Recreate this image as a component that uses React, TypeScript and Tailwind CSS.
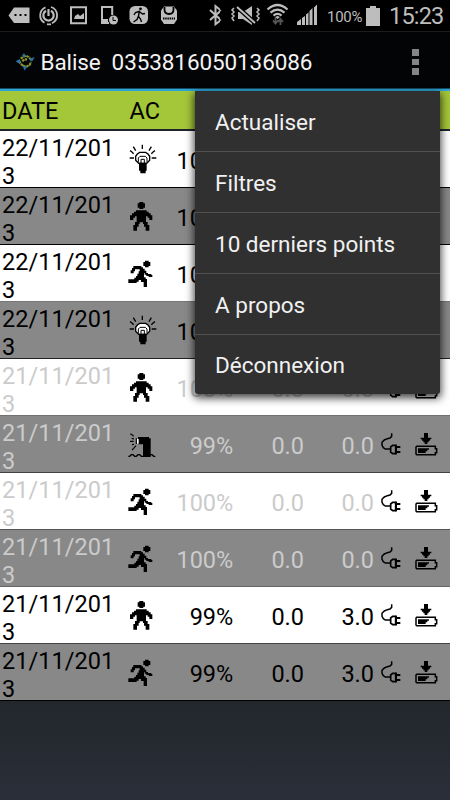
import React from 'react';
import clsx from 'clsx';

type Activity = 'light' | 'still' | 'run' | 'beacon';

interface Point {
  date: string;
  activity: Activity;
  battery: string;
  speed: string;
  distance: string;
  faded?: boolean;
  line: string;
}

const points: Point[] = [
  { date: '22/11/2013', activity: 'light', battery: '100%', speed: '0.0', distance: '0.0', line: 'border-black' },
  { date: '22/11/2013', activity: 'still', battery: '100%', speed: '0.0', distance: '0.0', line: 'border-black' },
  { date: '22/11/2013', activity: 'run', battery: '100%', speed: '0.0', distance: '0.0', line: 'border-[#777]' },
  { date: '22/11/2013', activity: 'light', battery: '100%', speed: '0.0', distance: '0.0', line: 'border-[#222]' },
  { date: '21/11/2013', activity: 'still', battery: '100%', speed: '0.0', distance: '0.0', faded: true, line: 'border-[#707070]' },
  { date: '21/11/2013', activity: 'beacon', battery: '99%', speed: '0.0', distance: '0.0', faded: true, line: 'border-[#444]' },
  { date: '21/11/2013', activity: 'run', battery: '100%', speed: '0.0', distance: '0.0', faded: true, line: 'border-[#555]' },
  { date: '21/11/2013', activity: 'run', battery: '100%', speed: '0.0', distance: '0.0', faded: true, line: 'border-[#666]' },
  { date: '21/11/2013', activity: 'still', battery: '99%', speed: '0.0', distance: '3.0', line: 'border-[#444]' },
  { date: '21/11/2013', activity: 'run', battery: '99%', speed: '0.0', distance: '3.0', line: 'border-black' },
];

const menuItems = ['Actualiser', 'Filtres', '10 derniers points', 'A propos', 'Déconnexion'];

function ActivityIcon({ type }: { type: Activity }) {
  return (
    <svg viewBox="0 0 90 90" className="h-[30px] w-[30px] overflow-visible">
      {type === 'still' && (
        <>
          <path d="M40 3H52V7H57V20H52V24H40V20H35V7H40Z" />
          <path d="M30 28H62V32H68V37H74V43H79V57H70V50H65V46H60V63H65V72H70V89H59V77H54V69H51V64H41V69H38V77H33V89H22V72H27V63H32V46H27V50H22V57H12V43H18V37H24V32H30Z" />
        </>
      )}
      {type === 'run' && (
        <>
          <path d="M57 8H68V12H73V24H68V28H57V24H52V12H57Z" />
          <path d="M22 24H46V28H51V32H56V38H61V45H66V48H76V51H79V57H68V54H61V50H56V45H54V58H59V63H63V87H53V72H45V66H38V71H32V75H7V64H25V59H30V54H34V47H38V40H41V34H27V40H23V46H14V37H18V30H22Z" />
        </>
      )}
      {type === 'light' && (
        <>
          <path
            d="M38 58l-4-4-5-5V37l5-7 7-5h18l7 5 5 7v12l-5 5-4 4z"
            fill="#fff"
            stroke="#000"
            strokeWidth="4"
          />
          <path d="M37 54V42l5-5h16l5 5v12M45 57V46h10v11" fill="none" stroke="#000" strokeWidth="3" />
          <path d="M39 56h23v24h-3v8H43v-8h-4z" />
          <path
            d="M49 2v13M22 8l3 5 4 7M76 8l-3 5-4 7M12 20l5 3 6 6M87 20l-5 3-6 6M11 42h13M77 42h14"
            fill="none"
            stroke="#000"
            strokeWidth="4"
          />
        </>
      )}
      {type === 'beacon' && (
        <>
          <path d="M36 24H69V28H74V84H51V46H36Z" />
          <rect x="32" y="30" width="6" height="14" fill="#fff" />
          <path
            d="M13 14l5 3 5 5M12 37h11M17 28l7 2M24 46l-6 1M30 50l-7 8-5 5M31 28v17"
            fill="none"
            stroke="#000"
            strokeWidth="3.5"
          />
          <path
            d="M7 82h4l5-5h5l5 5h5l5-5h5l5 5h22l5-5h5l5 5h5"
            fill="none"
            stroke="#000"
            strokeWidth="4"
          />
        </>
      )}
    </svg>
  );
}

function PlugIcon() {
  return (
    <svg viewBox="0 0 60 69" className="h-[23px] w-5" fill="none" stroke="#000">
      <path d="M32 1v9l-5 5-8 2-9 4-7 7v9l4 7 6 4h14" strokeWidth="4.5" />
      <path d="M35 37h9v25h-9l-6-5V42z" strokeWidth="5" />
      <path d="M45 35v29" strokeWidth="6" />
      <path d="M46 42h12M46 57h12" strokeWidth="6.5" />
    </svg>
  );
}

function ChargeIcon() {
  return (
    <svg viewBox="0 0 69 69" className="h-[23px] w-[23px]">
      <path d="M27 0h12v14h10v5h-4v4h-4v5h-4v5h-8v-5h-4v-5h-4v-4h-4v-5h10z" />
      <path d="M5 40h56v7h4v12h-4v6H5l-2-2V42z" fill="none" stroke="#000" strokeWidth="4.5" />
      <path d="M9 46h33v4h-5v5h-5v5H9z" />
    </svg>
  );
}

function StatusBar() {
  return (
    <div className="flex h-8 items-center border-b border-[#1d1d1d] bg-black pt-px text-[#bdbdbd]">
      <svg viewBox="0 0 220 32" className="h-8 w-[220px] shrink-0" fill="currentColor">
        <path d="M8.5 15.5 14 7.5h15.5v15.5H14z" />
        <path d="M14.5 14h2v2h-2zM19.5 14h2v2h-2zM24.5 14h2v2h-2z" fill="#000" />
        <g fill="none" stroke="currentColor">
          <path d="M45.5 7.3a8.7 8.7 0 0 0-1 15.5M51 7a8.7 8.7 0 0 1 1 16.2M47 24.2a9 9 0 0 0 4 0" strokeWidth="1.8" />
          <path d="M46 10.8a5.2 5.2 0 1 0 5 0M48.5 9v7" strokeWidth="2.2" />
          <path d="M71 7.3h15v16H71z" strokeWidth="2" />
          <path d="M109 23H102V7h10.2v8" strokeWidth="2" />
        </g>
        <path d="m74 19 1-3 3-2 2 2 4-3v6zM101 19h7v5h-7z" />
        <circle cx="113.5" cy="20" r="4.5" />
        <path d="M113 17v3.5h3" fill="none" stroke="#000" />
        <rect x="129.5" y="6" width="18.5" height="18" rx="5.5" />
        <circle cx="140.5" cy="8.8" r="1.4" fill="#000" />
        <path
          d="m139.500 10.500-1 5.500m.5-4.500-3.500 1-1.500 2.500m6-3 2.500 2 2.500-.5m-6.500 2.500-1.500 3.500-3.500 2.500m5-5.500 2 2.500 1 3"
          fill="none"
          stroke="#000"
          strokeWidth="1.4"
        />
        <path d="M164 6.500h10l3 4v9l-3 4.500h-10l-3-4.500v-9z" />
        <path d="M164.5 7v2.500q0 4.500 4.500 4.500t4.500-4.500V7" fill="none" stroke="#000" strokeWidth="1.8" />
        <path d="M163 18.5h12" stroke="#000" strokeWidth="2" strokeDasharray="1.5 .7" />
        <path d="m210 10 11 10-5.500 4.300V6L221 10.500 210 20" fill="none" stroke="currentColor" strokeWidth="2" />
      </svg>
      <svg viewBox="220 0 106 32" className="h-8 w-[106px] shrink-0" fill="currentColor">
        <path d="m220 9.500 1.500 1-1.500 1zM220 19l1.500 1-1.500 1z" />
        <path d="M238 12h5l9-6v19l-9-6h-5z" />
        <path d="m236 6 19 17" stroke="#000" strokeWidth="4.5" />
        <path d="m237 7 18 16" stroke="currentColor" strokeWidth="2" />
        <path
          d="m234 8-2 2 2 2-2 2 2 2-2 2 2 3M257 8l2 2-2 2 2 2-2 2 2 2-2 3"
          fill="none"
          stroke="currentColor"
          strokeWidth="1.5"
        />
        <g fill="none" stroke="currentColor" strokeWidth="2.2">
          <path d="M267.5 9.500q10-9 20 0M270.500 12.700q7-6 14 0M273.500 15.700q4-3.500 8 0" />
        </g>
        <path d="m275 17 2.500-1 2.500 1-2.500 2z" />
        <path
          d="M275.500 17.500v6m-2.500-3 2.500 3 2.500-3M280.500 25v-6m-2.500 3 2.500-3 2.500 3"
          fill="none"
          stroke="#555"
          strokeWidth="1.8"
        />
        <path d="M297 25v-3l4-3v6zM302 25v-7l3-2v9zM306 25V14.500l2.500-2V25zM309.500 25V11l3-3v17zM314 25V7.500l3-3V25z" />
      </svg>
      <span className="w-10 shrink-0 pt-0.5 pl-px text-[15px] tracking-[-0.3px]">100%</span>
      <svg viewBox="0 0 14 20" className="h-5 w-[14px] shrink-0" fill="currentColor">
        <path d="M0 2h4V0h6v2h4v18H0z" />
      </svg>
      <span className="ml-[9px] pt-0.5 text-[23.5px] tracking-[-0.8px]">15:23</span>
    </div>
  );
}

function ActionBar() {
  return (
    <div className="flex h-[59px] items-center border-b-2 border-[#2ba6da] bg-[#030405] pt-[3px] shadow-[inset_0_-1px_0_#164b62]">
      <svg viewBox="0 0 60 54" className="ml-[15px] h-[18px] w-5 shrink-0">
        <path
          d="M17 17l8-6 8-3 8 4 5 6M13 24l3 7 8 7M24 38l10 3 10-5 4-9M22 25l6-6h8"
          fill="none"
          stroke="#8a9630"
          strokeWidth="6.5"
          strokeDasharray="8 2"
        />
        <path d="m21 8 6-8 5 9-5 4zM2 25l12-7 2 7-3 7zM44 17l15-5-7 13-6-1zM23 39l13 1-7 13z" fill="#2873a6" />
      </svg>
      <h1 className="ml-[5.5px] flex-1 whitespace-pre pt-0.5 text-[22.5px] tracking-[-0.1px] text-[#f3f3f3]">
        {'Balise  0353816050136086'}
      </h1>
      <div className="mr-[31.5px] flex flex-col gap-[3px]">
        <span className="h-[6.5px] w-[7px] bg-[#858585]" />
        <span className="h-[6.5px] w-[7px] bg-[#858585]" />
        <span className="h-[6.5px] w-[7px] bg-[#858585]" />
      </div>
    </div>
  );
}

function PointRow({ point, odd }: { point: Point; odd: boolean }) {
  return (
    <div
      className={clsx(
        'flex h-[57px] items-center border-b text-[23.5px] leading-7',
        point.line,
        odd ? 'bg-[#888]' : 'bg-white',
        point.faded ? 'text-[#cbcbcb]' : 'text-black',
      )}
    >
      <div className="w-[126px] pt-1.5 pl-0.5">
        <p className="w-[114px] break-all tracking-[0.06px]">{point.date}</p>
      </div>
      <ActivityIcon type={point.activity} />
      <span className="w-[77px] pt-[3px] text-right tracking-[-0.1px]">{point.battery}</span>
      <span className="w-[71px] pt-[3px] text-right">{point.speed}</span>
      <span className="w-[70px] pt-[3px] text-right">{point.distance}</span>
      <span className="ml-[7px]">
        <PlugIcon />
      </span>
      <span className="ml-[14px]">
        <ChargeIcon />
      </span>
    </div>
  );
}

function OverflowMenu() {
  return (
    <ul className="absolute top-[91px] left-[195px] w-[245px] divide-y divide-[#505050] rounded-b-[3px] bg-[#303030] shadow-[0_3px_9px_1px_rgba(0,0,0,0.75)]">
      {menuItems.map((item) => (
        <li key={item} className="flex h-[61px] items-center pt-[3px] pl-5 text-[22.5px] text-[#f1f1f1] last:h-[59px]">
          {item}
        </li>
      ))}
    </ul>
  );
}

export default function App() {
  return (
    <div className="relative flex h-[800px] w-[450px] flex-col overflow-hidden bg-linear-to-b from-[#202629] from-85% to-[#2a2e39] font-['Roboto',sans-serif]">
      <StatusBar />
      <ActionBar />
      <div className="flex h-10 items-center border-b-2 border-[#20242a] bg-[#a4c639] pt-1 text-[23.5px] text-black">
        <span className="w-[129.5px] pl-0.5">DATE</span>
        <span>AC</span>
      </div>
      {points.map((point, i) => (
        <PointRow key={i} point={point} odd={i % 2 === 1} />
      ))}
      <OverflowMenu />
    </div>
  );
}
